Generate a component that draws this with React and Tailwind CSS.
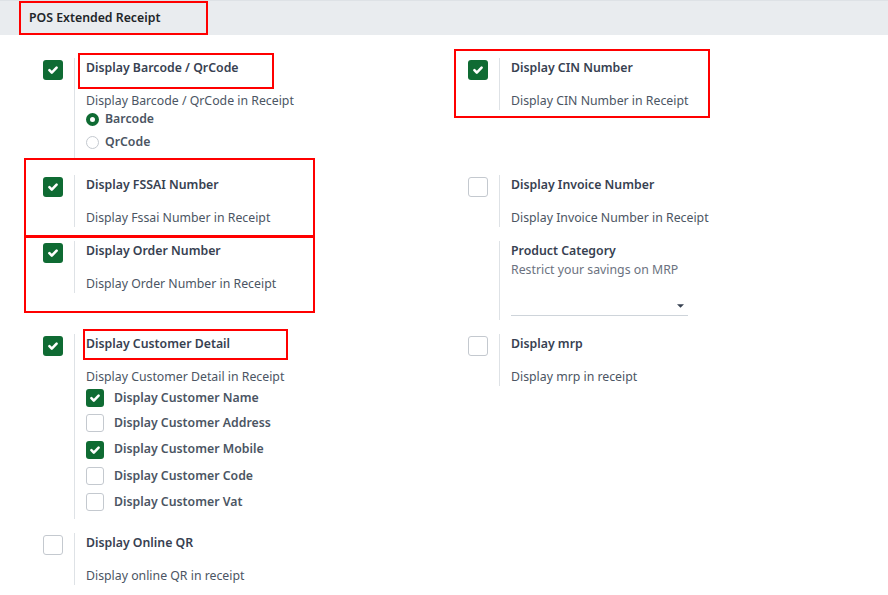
import { useState } from 'react'

const font = { fontFamily: '"Noto Sans", "Open Sans", sans-serif' }

function Check({ on, small }) {
  const size = small ? 'w-[18px] h-[18px]' : 'w-5 h-5'
  if (!on) {
    return <span className={`${size} block rounded-[3px] border border-[#c4c9cf] bg-white`} />
  }
  return (
    <span className={`${size} rounded-[3px] bg-[#0f6b33] flex items-center justify-center`}>
      <svg viewBox="0 0 12 12" className="w-[12px] h-[12px]" fill="none" stroke="white" strokeWidth="2.6" strokeLinecap="round" strokeLinejoin="round">
        <path d="M2.4 6.2l2.4 2.4 4.8-4.9" />
      </svg>
    </span>
  )
}

function Setting({ on, title, desc, children, noBox, className = '' }) {
  return (
    <div className={`flex ${className}`}>
      <div className="w-[56px] shrink-0 pl-[25px] pt-[2px]">{!noBox && <Check on={on} />}</div>
      <div className="border-l border-[#dee2e6] pl-[11px] flex-1">
        <div className="text-[12.3px] leading-[20px] font-semibold text-[#374151]">{title}</div>
        {desc && <div className="mt-[14px] text-[12.3px] leading-[18px] text-[#4b5563]">{desc}</div>}
        {children}
      </div>
    </div>
  )
}

function Radio({ on, label }) {
  return (
    <div className="h-[23px] flex items-center gap-[6px]">
      {on ? (
        <span className="w-[13px] h-[13px] rounded-full border-[4px] border-[#0f6b33] bg-white" />
      ) : (
        <span className="w-[13px] h-[13px] rounded-full border border-[#c4c9cf] bg-white" />
      )}
      <span className="text-[12.3px] font-semibold text-[#4b5563]">{label}</span>
    </div>
  )
}

function SubCheck({ on, label, h }) {
  return (
    <div className={`flex items-center gap-[10px] ${h}`}>
      <Check on={on} small />
      <span className="text-[12.3px] font-semibold text-[#4b5563]">{label}</span>
    </div>
  )
}

export default function App() {
  const [mode] = useState('barcode')
  return (
    <div className="relative w-[888px] h-[595px] bg-white overflow-hidden" style={font}>
      <div className="h-[35px] bg-[#e9ecef] border-t border-[#dee2e6] flex items-center pl-[29px]">
        <h2 className="text-[12.3px] font-semibold text-[#212529]">POS Extended Receipt</h2>
      </div>

      <div className="px-[18px] pt-[23px] grid grid-cols-[425px_425px]">
        {/* row 1 */}
        <Setting on title="Display Barcode / QrCode" desc="Display Barcode / QrCode in Receipt">
          <div className="mt-[-2px] pb-[4px]">
            <Radio on={mode === 'barcode'} label="Barcode" />
            <Radio on={mode === 'qrcode'} label="QrCode" />
          </div>
        </Setting>
        <Setting on title="Display CIN Number" desc="Display CIN Number in Receipt" className="self-start" />

        {/* row 2 */}
        <Setting on title="Display FSSAI Number" desc="Display Fssai Number in Receipt" className="mt-[17px]" />
        <Setting title="Display Invoice Number" desc="Display Invoice Number in Receipt" className="mt-[17px]" />

        {/* row 3 */}
        <Setting on title="Display Order Number" desc="Display Order Number in Receipt" className="mt-[14px] self-start" />
        <Setting noBox title="Product Category" className="mt-[14px]">
          <div className="text-[12.3px] leading-[18px] text-[#6b7280]">Restrict your savings on MRP</div>
          <div className="mt-[18px] w-[177px] h-[19px] border-b border-[#ced4da] flex items-center justify-end pr-[4px] mb-[4px]">
            <svg viewBox="0 0 8 4" className="w-[7px] h-[4px]">
              <path d="M0 0h8L4 4z" fill="#374151" />
            </svg>
          </div>
        </Setting>

        {/* row 4 */}
        <Setting on title="Display Customer Detail" className="mt-[14px]">
          <div className="mt-[14px] text-[12.3px] leading-[18px] text-[#4b5563]">Display Customer Detail in Receipt</div>
          <div className="pb-[4px]">
            <SubCheck on label="Display Customer Name" h="h-[24px]" />
            <SubCheck label="Display Customer Address" h="h-[26px]" />
            <SubCheck on label="Display Customer Mobile" h="h-[27px]" />
            <SubCheck label="Display Customer Code" h="h-[26px]" />
            <SubCheck label="Display Customer Vat" h="h-[26px]" />
          </div>
        </Setting>
        <Setting title="Display mrp" desc="Display mrp in receipt" className="mt-[14px] self-start" />

        {/* row 5 */}
        <Setting title="Display Online QR" desc="Display online QR in receipt" className="mt-[14px]" />
      </div>

      {/* red annotation boxes */}
      <div className="absolute left-[19px] top-[1px] w-[189px] h-[34px] border-2 border-[#ff0000]" />
      <div className="absolute left-[78px] top-[53px] w-[196px] h-[36px] border-2 border-[#ff0000]" />
      <div className="absolute left-[454px] top-[49px] w-[256px] h-[69px] border-2 border-[#ff0000]" />
      <div className="absolute left-[24px] top-[158px] w-[291px] h-[80px] border-2 border-[#ff0000]" />
      <div className="absolute left-[24px] top-[235px] w-[291px] h-[78px] border-2 border-[#ff0000]" />
      <div className="absolute left-[83px] top-[329px] w-[205px] h-[31px] border-2 border-[#ff0000]" />
    </div>
  )
}
